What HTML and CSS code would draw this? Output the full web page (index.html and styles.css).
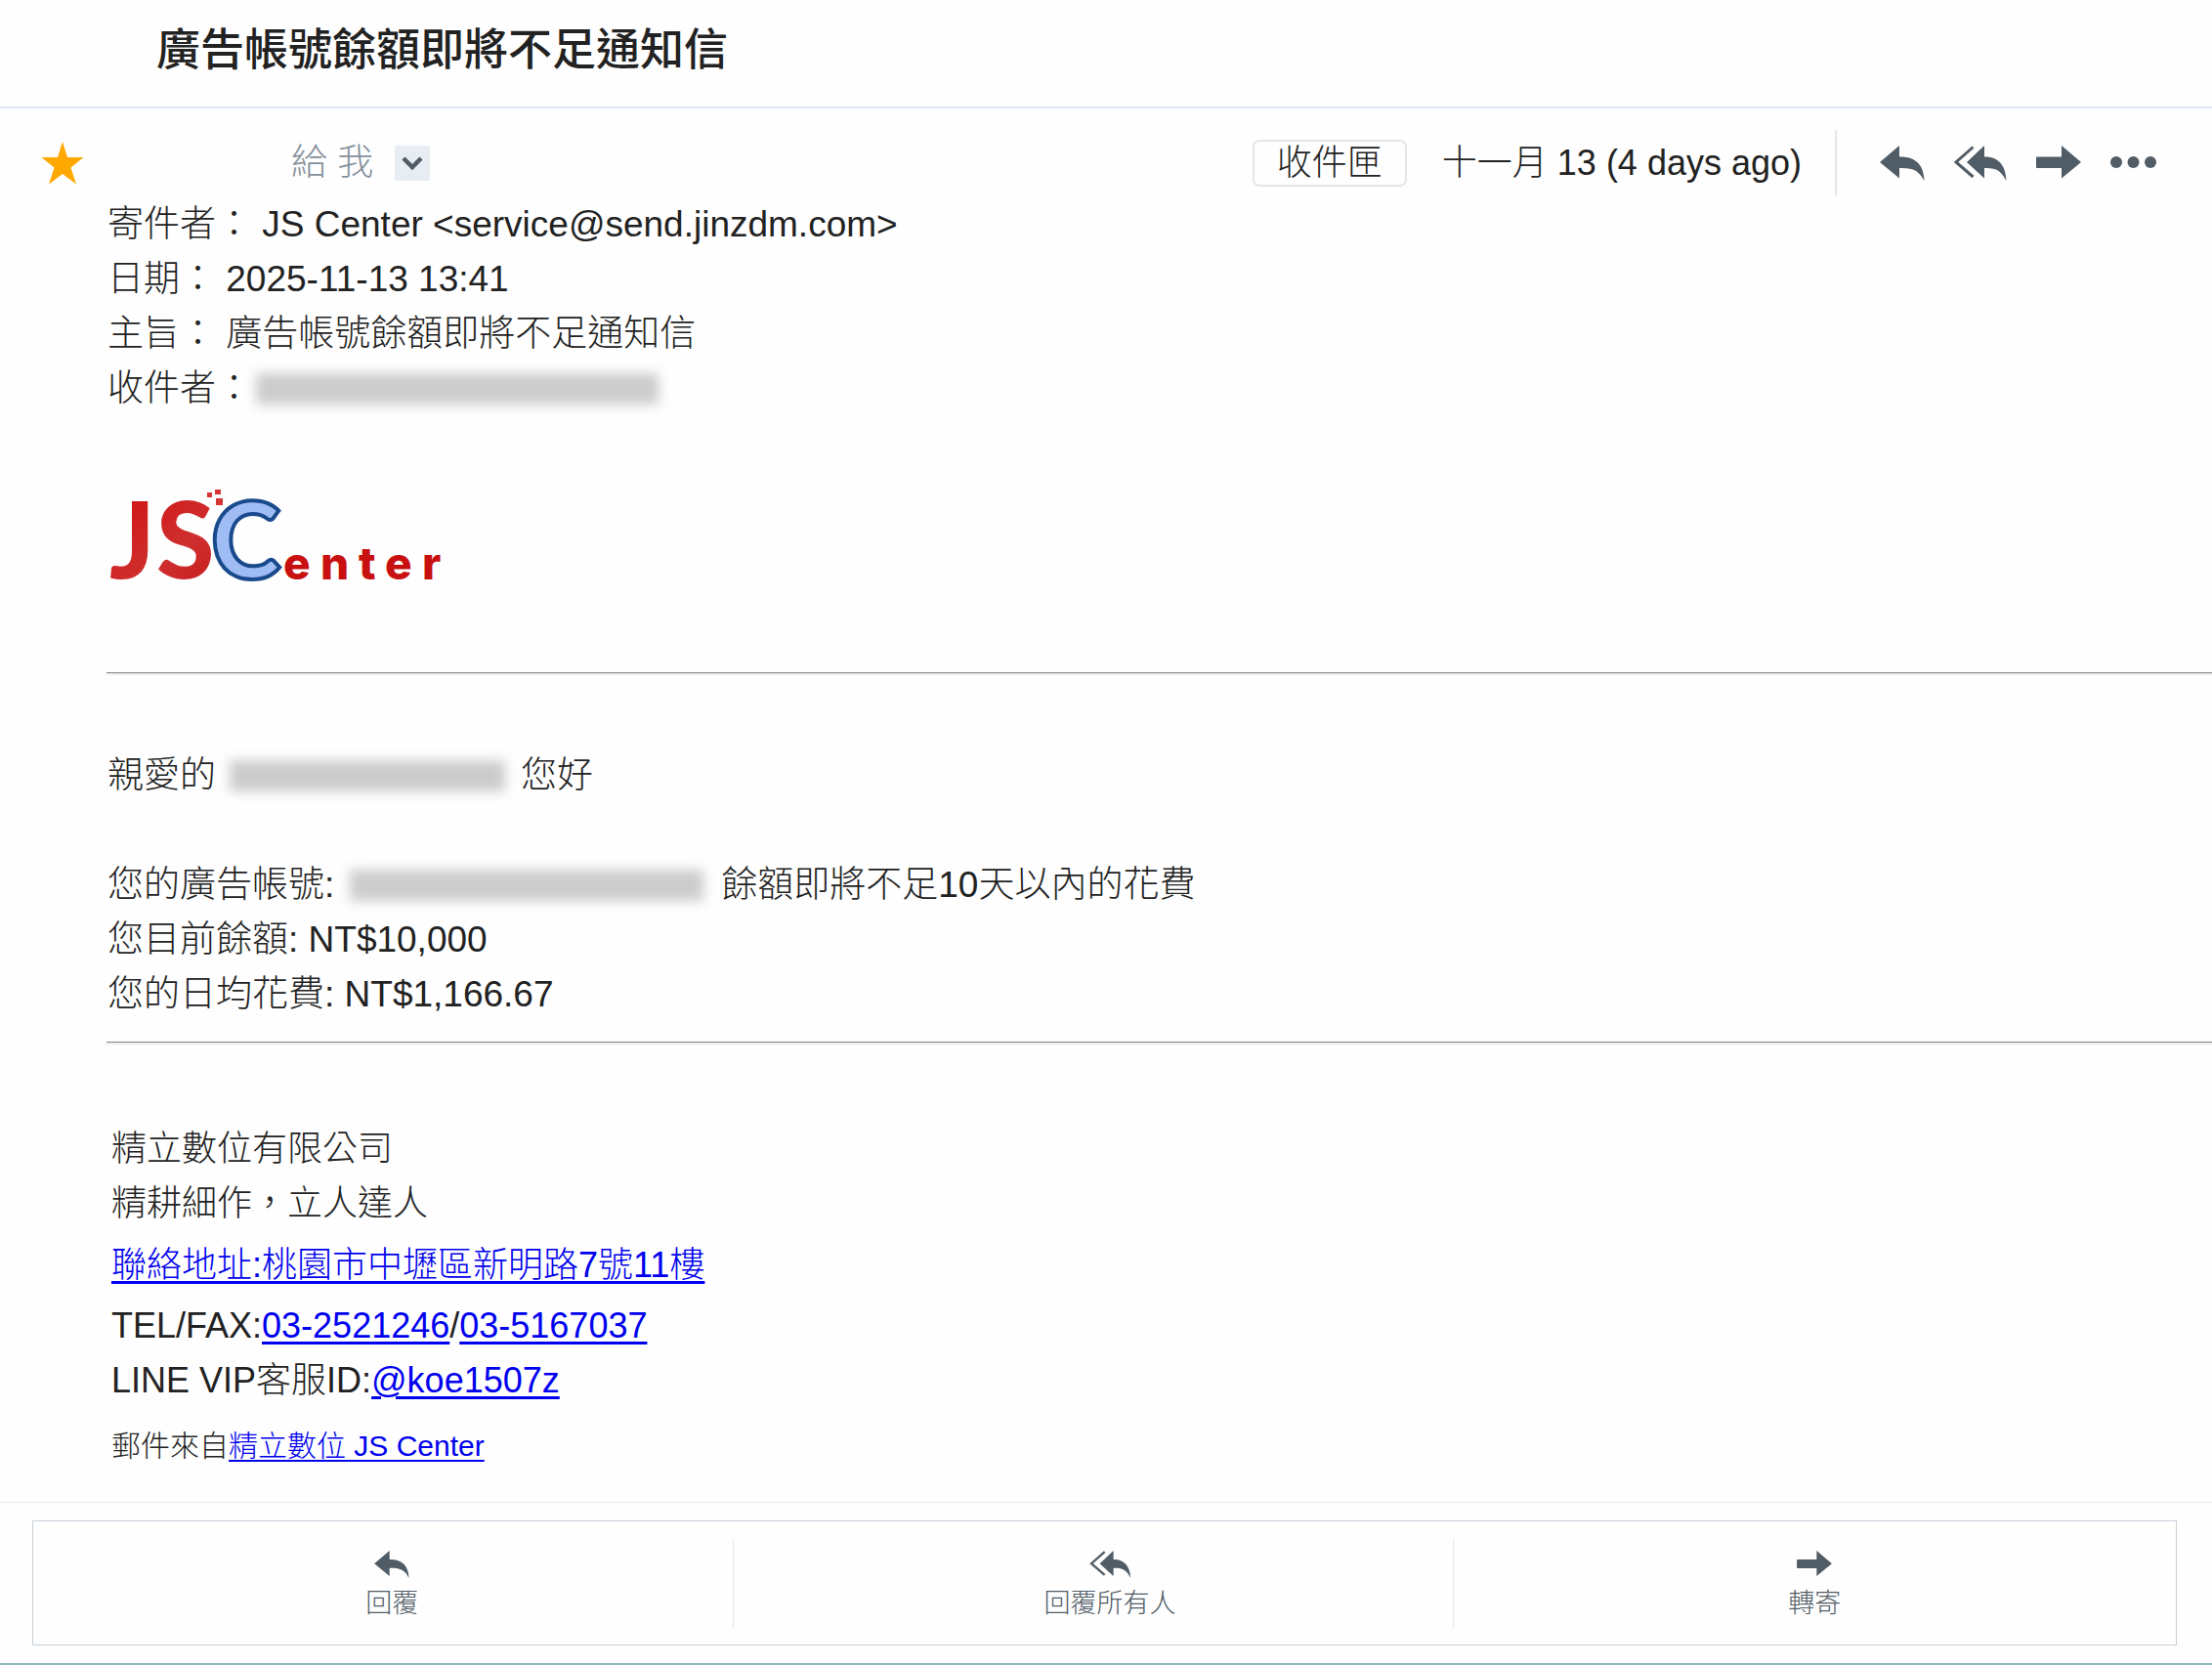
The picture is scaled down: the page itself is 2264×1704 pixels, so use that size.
FILE: index.html
```html
<!DOCTYPE html>
<html lang="zh-Hant">
<head>
  <meta charset="UTF-8" />
  <title>廣告帳號餘額即將不足通知信</title>
  <meta name="viewport" content="width=device-width, initial-scale=1.0" />
  <link rel="stylesheet" href="styles.css">
</head>
<body>
  <!-- shared icons -->
  <svg class="sprite" aria-hidden="true">
    <symbol id="reply" viewBox="0 0 46 36">
      <path d="M0 17 L20 0 V11.500 C36 11 45 19 45.500 36 C40 25.500 34 22.500 20 23 V33.500 Z" />
    </symbol>
    <symbol id="reply-all" viewBox="0 0 54 36">
      <path d="M13 17 L31 0 V11.500 C44 11 53 19 53.500 36 C48 25.500 43 22.500 31 23 V33.500 Z" />
      <path d="M19.500 1.500 L2 17 L19.500 32" fill="none" stroke="currentColor" stroke-width="3" />
    </symbol>
    <symbol id="forward" viewBox="0 0 46 36">
      <path d="M1 11.500 H26 V0 L46 17 L26 33.500 V23 H1 Q0 23 0 22 V12.500 Q0 11.500 1 11.500 Z" />
    </symbol>
  </svg>

  <header class="subject">
    <h1>廣告帳號餘額即將不足通知信</h1>
  </header>

  <main>
    <div class="mail-head">
      <button class="icon-btn star" aria-label="星號">
        <svg width="44" height="44" viewBox="0 0 44 44"><path d="M22 0 L27 16 H43.500 L30.500 26.500 L36 43.500 L22 33 L8 43.500 L13.500 26.500 L0.500 16 H17 Z" /></svg>
      </button>
      <span class="to">給 我</span>
      <button class="icon-btn toggle" aria-label="詳細資料">
        <svg width="22" height="16" viewBox="0 0 22 16"><path d="M2 3 L11 12 L20 3" fill="none" stroke="currentColor" stroke-width="4.500" /></svg>
      </button>
      <span class="folder">收件匣</span>
      <time class="date" datetime="2025-11-13">十一月 13 (4 days ago)</time>
      <div class="actions">
        <button class="icon-btn" aria-label="回覆"><svg width="46" height="36"><use href="#reply" /></svg></button>
        <button class="icon-btn" aria-label="回覆所有人"><svg width="54" height="36"><use href="#reply-all" /></svg></button>
        <button class="icon-btn" aria-label="轉寄"><svg width="46" height="36"><use href="#forward" /></svg></button>
        <button class="icon-btn" aria-label="更多"><svg width="48" height="36" viewBox="0 0 48 36"><circle cx="6" cy="17" r="6" /><circle cx="23.500" cy="17" r="6" /><circle cx="41" cy="17" r="6" /></svg></button>
      </div>
    </div>

    <article class="mail">
      <div class="details">
        <p>寄件者： JS Center &lt;service@send.jinzdm.com&gt;</p>
        <p>日期： 2025-11-13 13:41</p>
        <p>主旨： 廣告帳號餘額即將不足通知信</p>
        <p class="hidden-line">收件者：<span class="mask mask-to"></span></p>
      </div>

      <svg class="logo" width="355" height="165" viewBox="20 -15 355 165" role="img" aria-label="JSCenter">
        <defs>
          <linearGradient id="red" x1="0" y1="0" x2="1" y2="1">
            <stop offset="0" stop-color="#d00c0c" />
            <stop offset="0.500" stop-color="#cf2f2f" />
            <stop offset="1" stop-color="#bd0a0a" />
          </linearGradient>
        </defs>
        <text class="logo-big" y="112"><tspan class="logo-red" x="22">J</tspan><tspan class="logo-red" x="70">S</tspan><tspan class="logo-c" x="126">C</tspan></text>
        <g fill="#d63535">
          <rect x="122" y="24" width="5" height="5" />
          <rect x="130" y="21" width="6" height="5" />
          <rect x="131" y="30" width="7" height="7" />
        </g>
        <text class="logo-small" x="200 238 277 304 342" y="113">enter</text>
      </svg>

      <hr>

      <div class="content">
        <p class="hidden-line">親愛的<span class="mask mask-name"></span>您好</p>
        <p class="hidden-line account">您的廣告帳號:<span class="mask mask-account"></span>餘額即將不足10天以內的花費</p>
        <p>您目前餘額: NT$10,000</p>
        <p>您的日均花費: NT$1,166.67</p>
      </div>

      <hr>

      <div class="signature">
        <p>精立數位有限公司</p>
        <p>精耕細作，立人達人</p>
        <p class="address"><a href="#">聯絡地址:桃園市中壢區新明路7號11樓</a></p>
        <p>TEL/FAX:<a href="tel:03-2521246">03-2521246</a>/<a href="tel:03-5167037">03-5167037</a></p>
        <p>LINE VIP客服ID:<a href="#">@koe1507z</a></p>
        <p class="source">郵件來自<a href="#">精立數位 JS Center</a></p>
      </div>
    </article>
  </main>

  <footer>
    <div class="reply-bar">
      <button><svg width="36" height="28"><use href="#reply" /></svg>回覆</button>
      <button><svg width="43" height="28"><use href="#reply-all" /></svg>回覆所有人</button>
      <button><svg width="36" height="28"><use href="#forward" /></svg>轉寄</button>
    </div>
  </footer>
</body>
</html>
```
FILE: styles.css
```css
* {
  box-sizing: border-box;
}

body {
  margin: 0;
  min-height: 100vh;
  display: flex;
  flex-direction: column;
  background: #fefefe;
  color: #222;
  font-family: "Liberation Sans", "Noto Sans CJK TC", sans-serif;
  font-size: 37px;
  font-weight: 300;
  line-height: 56px;
  border-bottom: 2px solid #8fb9bb;
}

p, h1 {
  margin: 0;
}

svg {
  display: block;
  fill: currentColor;
}

.sprite {
  position: absolute;
  width: 0;
  height: 0;
}

.subject {
  padding: 24px 160px 29px;
  border-bottom: 2px solid #e2e8f0;
}

.subject h1 {
  font-size: 45px;
  font-weight: 500;
}

/* sender row */
.mail-head {
  display: flex;
  align-items: center;
  padding: 22px 56px 0 42px;
}

.icon-btn {
  padding: 0;
  border: 0;
  background: none;
  color: #505c66;
  cursor: pointer;
}

.star {
  color: #ffa800;
}

.to {
  margin-left: 212px;
  color: #84909a;
}

.toggle {
  display: flex;
  align-items: center;
  justify-content: center;
  width: 36px;
  height: 36px;
  margin-left: 22px;
  border-radius: 2px;
  background: #e8edf3;
}

.folder {
  margin-left: auto;
  padding: 0 23px;
  border: 2px solid #e3e5e8;
  border-radius: 7px;
  font-size: 36px;
  line-height: 44px;
}

.date {
  margin-left: 36px;
  font-size: 36px;
}

.actions {
  display: flex;
  align-items: center;
  gap: 30px;
  height: 67px;
  margin-left: 34px;
  padding-left: 44px;
  border-left: 2px solid #e3e5e8;
}

/* message */
.mail {
  padding-left: 109px;
}

.details {
  padding: 2px 0 0 1px;
}

.hidden-line {
  display: flex;
  align-items: center;
}

.mask {
  height: 32px;
  background: #ccc;
  filter: blur(6px);
}

.mask-to {
  width: 412px;
  margin-left: 4px;
}

.mask-name {
  width: 282px;
  margin: 0 16px 0 14px;
}

.mask-account {
  width: 362px;
  margin: 0 18px 0 16px;
}

.logo {
  margin: 39px 0 58px 1px;
}

.logo-big {
  font-family: Lato, "Liberation Sans", sans-serif;
  font-size: 108px;
  font-weight: 900;
}

.logo-red {
  fill: url(#red);
}

.logo-c {
  fill: #a0bcf4;
  stroke: #184a8c;
  stroke-width: 4px;
}

.logo-small {
  fill: #c81010;
  font-family: Inter, "Liberation Sans", sans-serif;
  font-size: 46px;
  font-weight: 800;
}

hr {
  height: 3px;
  margin: 0;
  border: 0;
  border-top: 1px solid #888;
  background: #eee;
}

.content {
  padding: 75px 0 20px 1px;
}

.account {
  margin-top: 56px;
}

.signature {
  padding: 79px 0 27px 5px;
  font-size: 36px;
}

.signature a {
  color: #0000ee;
  text-underline-offset: 4px;
  text-decoration-thickness: 3px;
}

.address {
  margin: 7px 0 6px;
}

.source {
  margin-top: 11px;
  font-size: 30px;
}

.signature .source a {
  text-decoration-thickness: 2px;
}

/* bottom reply buttons */
footer {
  margin-top: auto;
  padding: 18px 36px 18px 33px;
  border-top: 1px solid #e3e5e8;
}

.reply-bar {
  display: grid;
  grid-template-columns: 718fr 737fr 740fr;
  padding: 17px 0;
  border: 1px solid #c5d0da;
}

.reply-bar button {
  display: flex;
  flex-direction: column;
  align-items: center;
  gap: 6px;
  padding: 13px 0 5px;
  border: 0;
  border-right: 1px solid #e2e8f0;
  background: none;
  color: #505c66;
  font: inherit;
  font-size: 27px;
  line-height: 40px;
  cursor: pointer;
}

.reply-bar button:nth-child(1) {
  padding-left: 18px;
}

.reply-bar button:nth-child(2) {
  padding-left: 34px;
}

.reply-bar button:last-child {
  border-right: 0;
}
```
